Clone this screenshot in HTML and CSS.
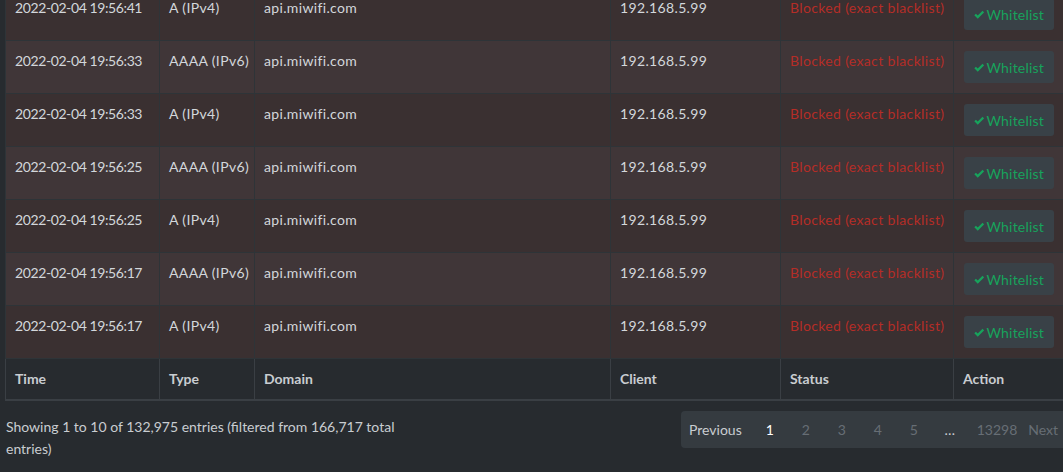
FILE: index.html
```html
<!DOCTYPE html>
<html lang="en">
<head>
    <meta charset="UTF-8">
    <title>Query Log</title>
    <link rel="stylesheet" href="styles.css">
</head>
<body>
    <div class="log-panel">
        <table class="log-table">
            <colgroup>
                <col class="col-time">
                <col class="col-type">
                <col class="col-domain">
                <col class="col-client">
                <col class="col-status">
                <col class="col-action">
            </colgroup>
            <tbody>
                <tr>
                    <td class="time">2022-02-04 19:56:41</td><td>A (IPv4)</td><td>api.miwifi.com</td><td>192.168.5.99</td>
                    <td class="blocked">Blocked (exact blacklist)</td>
                    <td><button class="btn-whitelist"><svg class="check" viewBox="0 0 14 11"><path d="M1.5 5.5 L5 9 L12.5 1.5"/></svg>Whitelist</button></td>
                </tr>
                <tr>
                    <td class="time">2022-02-04 19:56:33</td><td>AAAA (IPv6)</td><td>api.miwifi.com</td><td>192.168.5.99</td>
                    <td class="blocked">Blocked (exact blacklist)</td>
                    <td><button class="btn-whitelist"><svg class="check" viewBox="0 0 14 11"><path d="M1.5 5.5 L5 9 L12.5 1.5"/></svg>Whitelist</button></td>
                </tr>
                <tr>
                    <td class="time">2022-02-04 19:56:33</td><td>A (IPv4)</td><td>api.miwifi.com</td><td>192.168.5.99</td>
                    <td class="blocked">Blocked (exact blacklist)</td>
                    <td><button class="btn-whitelist"><svg class="check" viewBox="0 0 14 11"><path d="M1.5 5.5 L5 9 L12.5 1.5"/></svg>Whitelist</button></td>
                </tr>
                <tr>
                    <td class="time">2022-02-04 19:56:25</td><td>AAAA (IPv6)</td><td>api.miwifi.com</td><td>192.168.5.99</td>
                    <td class="blocked">Blocked (exact blacklist)</td>
                    <td><button class="btn-whitelist"><svg class="check" viewBox="0 0 14 11"><path d="M1.5 5.5 L5 9 L12.5 1.5"/></svg>Whitelist</button></td>
                </tr>
                <tr>
                    <td class="time">2022-02-04 19:56:25</td><td>A (IPv4)</td><td>api.miwifi.com</td><td>192.168.5.99</td>
                    <td class="blocked">Blocked (exact blacklist)</td>
                    <td><button class="btn-whitelist"><svg class="check" viewBox="0 0 14 11"><path d="M1.5 5.5 L5 9 L12.5 1.5"/></svg>Whitelist</button></td>
                </tr>
                <tr>
                    <td class="time">2022-02-04 19:56:17</td><td>AAAA (IPv6)</td><td>api.miwifi.com</td><td>192.168.5.99</td>
                    <td class="blocked">Blocked (exact blacklist)</td>
                    <td><button class="btn-whitelist"><svg class="check" viewBox="0 0 14 11"><path d="M1.5 5.5 L5 9 L12.5 1.5"/></svg>Whitelist</button></td>
                </tr>
                <tr>
                    <td class="time">2022-02-04 19:56:17</td><td>A (IPv4)</td><td>api.miwifi.com</td><td>192.168.5.99</td>
                    <td class="blocked">Blocked (exact blacklist)</td>
                    <td><button class="btn-whitelist"><svg class="check" viewBox="0 0 14 11"><path d="M1.5 5.5 L5 9 L12.5 1.5"/></svg>Whitelist</button></td>
                </tr>
            </tbody>
            <tfoot>
                <tr>
                    <th>Time</th><th>Type</th><th>Domain</th><th>Client</th><th>Status</th><th>Action</th>
                </tr>
            </tfoot>
        </table>

        <div class="table-footer">
            <div class="table-info">Showing 1 to 10 of 132,975 entries (filtered from 166,717 total entries)</div>
            <ul class="pagination">
                <li class="page-prev">Previous</li>
                <li class="active">1</li>
                <li>2</li>
                <li>3</li>
                <li>4</li>
                <li>5</li>
                <li class="ellipsis">&hellip;</li>
                <li class="page-last">13298</li>
                <li class="page-next">Next</li>
            </ul>
        </div>
    </div>
</body>
</html>
```

FILE: styles.css
```css
* {
    margin: 0;
    padding: 0;
    box-sizing: border-box;
}

body {
    background-color: #272b2f;
    font-family: Lato, 'Liberation Sans', sans-serif;
    font-size: 14px;
    color: #d3d7db;
    overflow: hidden;
    width: 1063px;
    height: 472px;
}

.log-panel {
    margin-top: -13px;
    padding-left: 5px;
    width: 1140px;
}

.log-table {
    border-collapse: collapse;
    table-layout: fixed;
    width: 1130px;
    border-left: 1px solid #2f363b;
}

.col-time { width: 154px; }
.col-type { width: 95px; }
.col-domain { width: 356px; }
.col-client { width: 170px; }
.col-status { width: 173px; }
.col-action { width: 182px; }

.log-table td {
    height: 53px;
    padding: 10px 9px;
    vertical-align: top;
    line-height: 20px;
    letter-spacing: 0.35px;
    border: 1px solid #2e3438;
    white-space: nowrap;
    overflow: hidden;
}

.log-table td.time {
    letter-spacing: -0.4px;
}

.log-table tbody tr:nth-child(odd) td {
    background-color: #3a3031;
}

.log-table tbody tr:nth-child(even) td {
    background-color: #403638;
}

.log-table td.blocked {
    color: #b52d27;
}

.btn-whitelist {
    display: inline-flex;
    align-items: center;
    height: 32px;
    width: 90px;
    margin-left: 1px;
    padding: 0 10px;
    background-color: #394147;
    border: none;
    border-radius: 3px;
    color: #17a35c;
    font-family: Lato, 'Liberation Sans', sans-serif;
    font-size: 14px;
    letter-spacing: 0.2px;
    cursor: pointer;
}

.check {
    width: 14px;
    height: 11px;
    margin-right: 2px;
    fill: none;
    stroke: #17a35c;
    stroke-width: 3;
}

.log-table tfoot th {
    height: 41px;
    padding: 0 9px;
    text-align: left;
    font-weight: bold;
    color: #c9cdd1;
    background-color: #272b2f;
    border: 1px solid #3a3f44;
    border-bottom-width: 2px;
}

.table-footer {
    display: flex;
    align-items: flex-start;
    padding-left: 1px;
}

.table-info {
    width: 410px;
    margin-top: 15px;
    line-height: 22px;
    color: #c9cdd1;
}

.pagination {
    list-style: none;
    display: flex;
    align-items: center;
    height: 37px;
    margin-top: 10px;
    margin-left: 265px;
    padding: 0 8px;
    background-color: #353b40;
    border-radius: 4px;
}

.pagination li {
    width: 36px;
    text-align: center;
    color: #676e75;
}

.pagination li.page-prev {
    width: auto;
    padding-right: 10px;
    color: #c9cdd1;
}

.pagination li.active {
    color: #ffffff;
}

.pagination li.ellipsis {
    color: #c9cdd1;
}

.pagination li.page-last {
    width: auto;
    padding: 0 11px 0 9px;
}

.pagination li.page-next {
    width: auto;
}
```
